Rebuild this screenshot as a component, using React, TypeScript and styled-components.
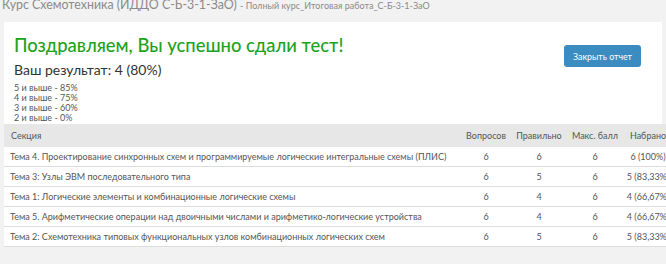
import React from "react";
import styled, { createGlobalStyle } from "styled-components";

const GlobalStyle = createGlobalStyle`
  html, body {
    margin: 0;
    padding: 0;
    background: #f2f2f2;
    overflow: hidden;
  }
  body {
    font-family: Lato, "Open Sans", "Noto Sans", sans-serif;
    color: #333;
  }
`;

const Page = styled.div`
  width: 666px;
  height: 264px;
  overflow: hidden;
`;

const Breadcrumb = styled.div`
  height: 27px;
  margin-top: -5px;
  padding-left: 2px;
  white-space: nowrap;
  color: #8a8a8a;
  font-size: 12.4px;
  line-height: 20px;
`;

const Sub = styled.span`
  font-size: 9px;
`;

const Card = styled.div`
  margin: 0 4px;
  height: 102px;
  box-sizing: border-box;
  background: #fff;
  padding: 11px 21px 0 10px;
  display: flex;
  justify-content: space-between;
  align-items: flex-start;
`;

const Left = styled.div`
  display: flex;
  flex-direction: column;
`;

const Heading = styled.h1`
  margin: 0;
  font-size: 18.4px;
  line-height: 24px;
  font-weight: 500;
  color: #1ca31c;
`;

const Result = styled.div`
  margin-top: 4px;
  font-size: 14px;
  line-height: 18px;
  color: #333;
`;

const Grades = styled.div`
  margin-top: 4px;
  font-size: 9px;
  line-height: 10px;
  color: #555;
`;

const Button = styled.button`
  margin-top: 12px;
  background: #3a8cc1;
  color: #fff;
  border: none;
  border-radius: 3px;
  font-family: inherit;
  font-size: 8.8px;
  height: 22px;
  padding: 0 9px;
`;

const Table = styled.table`
  margin-left: 4px;
  width: 669px;
  border-collapse: collapse;
  table-layout: fixed;
  font-size: 9px;
  color: #555;
  background: #fff;
`;

const Th = styled.th<{ $w?: number; $left?: boolean }>`
  width: ${(p) => (p.$w ? `${p.$w}px` : "auto")};
  height: 23px;
  padding: 0;
  padding-left: ${(p) => (p.$left ? "7px" : "0")};
  background: #e7e7e7;
  font-weight: 400;
  text-align: ${(p) => (p.$left ? "left" : "center")};
  white-space: nowrap;
`;

const Td = styled.td<{ $left?: boolean }>`
  height: 19px;
  padding: 0;
  padding-left: ${(p) => (p.$left ? "6px" : "0")};
  border-bottom: 1px solid #dddddd;
  text-align: ${(p) => (p.$left ? "left" : "center")};
  white-space: nowrap;
  overflow: hidden;
`;

const rows = [
  ["Тема 4. Проектирование синхронных схем и программируемые логические интегральные схемы (ПЛИС)", "6", "6", "6", "6 (100%)"],
  ["Тема 3: Узлы ЭВМ последовательного типа", "6", "5", "6", "5 (83,33%)"],
  ["Тема 1: Логические элементы и комбинационные логические схемы", "6", "4", "6", "4 (66,67%)"],
  ["Тема 5. Арифметические операции над двоичными числами и арифметико-логические устройства", "6", "4", "6", "4 (66,67%)"],
  ["Тема 2: Схемотехника типовых функциональных узлов комбинационных логических схем", "6", "5", "6", "5 (83,33%)"],
];

export default function App() {
  return (
    <Page>
      <GlobalStyle />
      <Breadcrumb>
        Курс Схемотехника (ИДДО С-Б-3-1-ЗаО) <Sub>- Полный курс_Итоговая работа_С-Б-3-1-ЗаО</Sub>
      </Breadcrumb>
      <Card>
        <Left>
          <Heading>Поздравляем, Вы успешно сдали тест!</Heading>
          <Result>Ваш результат: 4 (80%)</Result>
          <Grades>
            <div>5 и выше - 85%</div>
            <div>4 и выше - 75%</div>
            <div>3 и выше - 60%</div>
            <div>2 и выше - 0%</div>
          </Grades>
        </Left>
        <Button>Закрыть отчет</Button>
      </Card>
      <Table>
        <thead>
          <tr>
            <Th $left>Секция</Th>
            <Th $w={50}>Вопросов</Th>
            <Th $w={56}>Правильно</Th>
            <Th $w={56}>Макс. балл</Th>
            <Th $w={50}>Набрано</Th>
          </tr>
        </thead>
        <tbody>
          {rows.map((r, i) => (
            <tr key={i}>
              <Td $left>{r[0]}</Td>
              <Td>{r[1]}</Td>
              <Td>{r[2]}</Td>
              <Td>{r[3]}</Td>
              <Td>{r[4]}</Td>
            </tr>
          ))}
        </tbody>
      </Table>
    </Page>
  );
}
